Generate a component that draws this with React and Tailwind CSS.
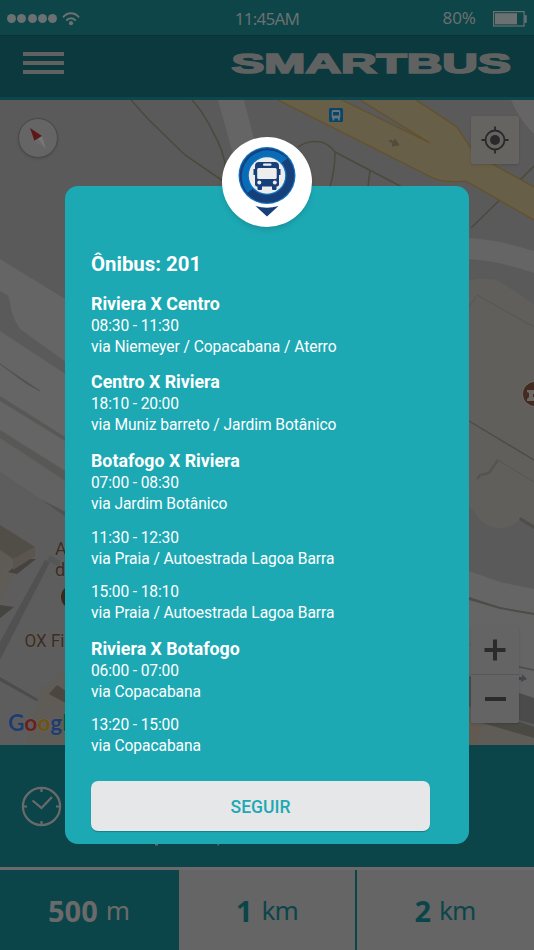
import React from 'react';

const schedule = [
  {
    title: 'Riviera X Centro',
    trips: [{ time: '08:30 - 11:30', via: 'via Niemeyer / Copacabana / Aterro' }],
  },
  {
    title: 'Centro X Riviera',
    trips: [{ time: '18:10 - 20:00', via: 'via Muniz barreto / Jardim Botânico' }],
  },
  {
    title: 'Botafogo X Riviera',
    trips: [
      { time: '07:00 - 08:30', via: 'via Jardim Botânico' },
      { time: '11:30 - 12:30', via: 'via Praia / Autoestrada Lagoa Barra' },
      { time: '15:00 - 18:10', via: 'via Praia / Autoestrada Lagoa Barra' },
    ],
  },
  {
    title: 'Riviera X Botafogo',
    trips: [
      { time: '06:00 - 07:00', via: 'via Copacabana' },
      { time: '13:20 - 15:00', via: 'via Copacabana' },
    ],
  },
];

function StatusBar() {
  return (
    <div className="h-[35px] bg-[#0d4549] grid grid-cols-3 items-center pl-[7px] pr-[7px] pt-[2px] text-[#6b7071] font-['Noto_Sans',sans-serif]">
      <div className="flex items-center gap-[5px]">
        <div className="flex gap-[1.3px]">
          {[0, 1, 2, 3, 4].map((i) => (
            <span key={i} className="w-[9px] h-[9px] rounded-full bg-[#6b7071]" />
          ))}
        </div>
        <svg width="18" height="14" viewBox="0 0 18 14" fill="none" stroke="#6b7071" strokeWidth="2">
          <path d="M1 5.3C5.5 0 12.5 0 17 5.3" />
          <path d="M4.2 8.6C6.9 5.5 11.1 5.5 13.8 8.6" />
          <circle cx="9" cy="11.2" r="2.1" fill="#6b7071" stroke="none" />
        </svg>
      </div>
      <div className="text-center text-[17px] tracking-[-0.75px] whitespace-nowrap">11:45AM</div>
      <div className="flex items-center justify-end gap-[17px]">
        <span className="text-[17px] leading-5 relative -top-[1px]">80%</span>
        <svg width="34" height="16" viewBox="0 0 34 16">
          <rect x="0.6" y="0.6" width="30.5" height="14.4" fill="none" stroke="#6b7071" strokeWidth="1.2" />
          <rect x="2" y="2.2" width="22" height="11.2" fill="#6b7071" />
          <rect x="31.5" y="4.2" width="2.2" height="7.6" fill="#6b7071" />
        </svg>
      </div>
    </div>
  );
}

function Header() {
  return (
    <div className="h-[65px] bg-[#0c393d] border-t border-t-[#0a3336] border-b-[3px] border-b-[#0d474b] flex items-start justify-between pl-[23px] pr-[20px] pt-[10px]">
      <div className="flex flex-col gap-[5px] mt-[6px]">
        <span className="w-[41px] h-[4px] bg-[#606262]" />
        <span className="w-[41px] h-[4px] bg-[#606262]" />
        <span className="w-[41px] h-[4px] bg-[#606262]" />
      </div>
      <svg width="284" height="38" viewBox="0 0 284 38">
        <g transform="translate(1.5 0) scale(1.73 1)">
          <text x="0" y="26.8" fontFamily="'Liberation Sans', sans-serif" fontWeight="700" fontSize="28.5" fill="#606262" stroke="#606262" strokeWidth="1.7">SMARTBUS</text>
        </g>
      </svg>
    </div>
  );
}

function Map() {
  return (
    <svg width="534" height="645" viewBox="0 100 534 645" className="block">
      <rect y="100" width="534" height="645" fill="#5a5a5a" />

      {/* paths and streets */}
      <path d="M218 100H244L256 146L234 158Z" fill="#656565" />
      <path d="M511 100H534V134Q520 121 511 100Z" fill="#656565" />
      <g fill="none" stroke="#4b4a3e" strokeWidth="1.6">
        <path d="M131 100L148 119L185 155L223 181" />
        <path d="M192 100Q204 113 213 132Q224 151 226 170" />
        <path d="M298 147Q308 140 321 142Q329 144 335 152L402 187" />
        <path d="M335 152Q335 170 330 187M370 170L368 187" />
        <path d="M534 166L510 190L471 228" />
      </g>

      {/* highway */}
      <path d="M278 100L433 178Q445 183 466 181L534 220V187L478 156L470 147L457 127L416 100Z" fill="#685f48" />
      <path d="M342 100H360L430 143Z" fill="#5a5a5a" />
      <g fill="none" stroke="#655128" strokeWidth="1.2">
        <path d="M278 100L433 178Q445 183 466 181L534 220" />
        <path d="M342 100L430 143L360 100M416 100L457 127L470 147L478 156L534 187" />
      </g>
      <path d="M390 140L394 142L395 139L399 145L392 146L393 143L389 141Z" fill="#514c3e" stroke="#514c3e" />
      <rect x="329" y="108" width="14" height="14" rx="1.5" fill="#064668" />
      <rect x="331.7" y="110" width="8.6" height="8.6" rx="1.5" fill="#6b7376" />
      <rect x="333" y="112" width="6" height="3.5" fill="#064668" />
      <path d="M332.5 118h1.8v2.5h-1.8zM338 118h1.8v2.5H338z" fill="#6b7376" />

      {/* left side roads */}
      <path d="M0 259L70 302V365L20 329Q14 320 11 310Q10 298 7 295L0 291Z" fill="#656565" />
      <path d="M0 331L70 377V485L0 439Z" fill="#656565" />
      <path d="M0 439L70 485V519L0 472Z" fill="#626262" />
      <path d="M0 396L70 440V444L0 401ZM0 430L70 474V484L0 438Z" fill="#585856" />
      <path d="M0 364L40 391L27 384Z" fill="#515151" stroke="#515151" strokeWidth="0.6" />

      {/* right side blocks */}
      <path d="M469 238Q495 239 534 251V273Q500 261 469 259Z" fill="#656565" />
      <path d="M469 281L475 279H491Q497 279 502 283L534 304V530L521 517Q515 528 498 528Q482 526 474 510L469 507Z" fill="#605f5b" />
      <path d="M469 307L477 295L534 327" fill="none" stroke="#575652" />
      <path d="M469 421L534 460" fill="none" stroke="#4e4c45" strokeWidth="1.4" />
      <path d="M498 460L534 482" fill="none" stroke="#595751" />
      <circle cx="500" cy="499" r="29" fill="#605f5b" />
      <path d="M477 479L480 475L489 473L498 460" fill="none" stroke="#56544e" strokeWidth="2.5" />
      <path d="M520 517L534 525V529L519 520Z" fill="#504e49" />
      <circle cx="535" cy="394" r="13" fill="#696663" />
      <circle cx="535" cy="394" r="12" fill="#422c22" />
      <path d="M527 390H534V394H533V397H534V401H527V399L529 397V393L527 392Z" fill="#6c6864" />

      <path d="M469 571L500 582L534 589V698L469 680Z" fill="#656565" />
      <path d="M469 597L500 607L534 613V615L500 609L469 600Z" fill="#4d4c46" />
      <path d="M469 676L534 698V724L469 707Z" fill="#4b4b4b" />
      <path d="M469 704L534 727V738L480 724Z" fill="#4a4944" />
      <path d="M469 706L482 723L534 738V745H469Z" fill="#5f5c57" />
      <path d="M469 706L482 723L476 745H469Z" fill="#625a51" />
      <path d="M505 664L534 670" stroke="#4d4c4a" strokeWidth="1.5" />
      <path d="M518 677H522V674L527 679L521 682V680H517Z" fill="#47454e" />

      {/* left side buildings */}
      <path d="M0 472L70 519V745H0Z" fill="#5d5d5d" />
      <path d="M42 500L70 514V520Z" fill="#525150" />
      <path d="M0 525L35 548L22 560L0 602Z" fill="#5f5c58" />
      <path d="M0 525L35 547L13 559L0 550Z" fill="#514e48" />
      <path d="M0 550L13 559L0 576Z" fill="#5e5a55" />
      <path d="M8 572L24 559H36L17 574Z" fill="#454340" />
      <path d="M35 547V556L13 570V559Z" fill="#5b554f" />
      <path d="M0 605L14 607L0 618Z" fill="#464440" />
      <path d="M45 560L50 562L0 660V642Z" fill="#515151" />
      <path d="M47 561L60 567V561L50 555Z" fill="#565656" />
      <path d="M0 677L38 699V702L0 681Z" fill="#4c4c4c" />
      <path d="M66 668L70 671V745H26L40 690Z" fill="#5f5c58" />
      <path d="M49 694L57 685L66 691V703L60 700Z" fill="#4b4740" />

      <g fontFamily="Roboto, sans-serif" fill="#3d2c22" stroke="#656361" strokeWidth="1.2" paintOrder="stroke">
        <text x="55" y="555" fontSize="18">A</text>
        <text x="55" y="576" fontSize="18">d</text>
        <text x="24.5" y="647" fontSize="19" textLength="40" lengthAdjust="spacingAndGlyphs">OX Fi</text>
      </g>
      <circle cx="73" cy="597" r="12" fill="#3c271d" />
      <text x="470" y="647" fontFamily="Roboto, sans-serif" fontSize="11.5" fill="#454545">al</text>
      <text x="8" y="731" fontFamily="Lato, sans-serif" fontWeight="700" fontSize="23" textLength="60" lengthAdjust="spacingAndGlyphs" stroke="#666" strokeWidth="1" paintOrder="stroke">
        <tspan fill="#1f3c70">G</tspan>
        <tspan fill="#6a201c">o</tspan>
        <tspan fill="#6e5410">o</tspan>
        <tspan fill="#1f3c70">g</tspan>
        <tspan fill="#174e27">l</tspan>
      </text>
    </svg>
  );
}

function MapControls() {
  return (
    <>
      <div className="absolute left-[18px] top-[18px] w-10 h-10 rounded-full bg-[#656565] border border-[#484848] shadow">
        <svg width="38" height="38" viewBox="0 0 38 38">
          <path d="M11 9L23 17L15.5 22Z" fill="#5e1718" />
          <path d="M23 17L27 30L15.5 22Z" fill="#777" />
          <path d="M19 19.5L27 30L15.5 22Z" fill="#696969" />
        </svg>
      </div>
      <div className="absolute left-[471px] top-[16px] w-12 h-12 rounded-[2px] bg-[#656461] shadow flex items-center justify-center">
        <svg width="28" height="28" viewBox="0 0 28 28" fill="none" stroke="#292929" strokeWidth="1.8">
          <circle cx="14" cy="14" r="9.5" />
          <circle cx="14" cy="14" r="5" fill="#292929" stroke="none" />
          <path d="M14 .5V5M14 23V27.5M.5 14H5M23 14H27.5" />
        </svg>
      </div>
      <div className="absolute left-[471px] top-[526px] w-12 h-[97px] rounded-[2px] bg-[#646464] shadow flex flex-col">
        <div className="flex-1 flex items-center justify-center border-b border-[#575757]">
          <svg width="22" height="22" viewBox="0 0 22 22"><path d="M9 0.5H13V9H21.5V13H13V21.5H9V13H.5V9H9Z" fill="#2b2b2b" /></svg>
        </div>
        <div className="flex-1 flex items-center justify-center">
          <span className="w-[21px] h-[4px] bg-[#2b2b2b]" />
        </div>
      </div>
    </>
  );
}

function BusBadge() {
  return (
    <div className="absolute left-[157px] -top-[49px] w-[90px] h-[90px] rounded-full bg-white shadow-md">
      <svg width="90" height="90" viewBox="0 0 90 90">
        <circle cx="45" cy="38.5" r="28.5" fill="#1272bd" />
        <circle cx="45" cy="38.5" r="27.3" fill="#17407b" />
        <path d="M25.3 55.7A26.2 26.2 0 0 1 65.2 21.8L58.5 26.5A19 19 0 0 0 31.5 51.5Z" fill="#086cb8" />
        <circle cx="45" cy="38.5" r="19.5" fill="#1272bd" />
        <circle cx="45" cy="38.5" r="18.2" fill="#ededed" />
        <g fill="#17407b">
          <path d="M37 25H53Q57 25 57 29V32H58.5V38H57V47.5Q57 49.5 55 49.5H54.5V52Q54.5 53 53.5 53H51Q50 53 50 52V49.5H40V52Q40 53 39 53H36.5Q35.5 53 35.5 52V49.5H35Q33 49.5 33 47.5V38H31.5V32H33V29Q33 25 37 25Z" />
          <path d="M33.5 69Q45 72.5 56.5 69L45 79.5Z" />
        </g>
        <rect x="41" y="26.5" width="8.5" height="2.2" rx="1" fill="#ededed" />
        <rect x="35.2" y="31" width="19.5" height="11" rx="1.5" fill="#ededed" />
        <circle cx="37.3" cy="45.5" r="2" fill="#ededed" />
        <circle cx="52.8" cy="45.5" r="2" fill="#ededed" />
      </svg>
    </div>
  );
}

function ScheduleModal() {
  return (
    <div className="absolute left-[65px] top-[186px] w-[404px] h-[658px] rounded-[13px] bg-[#1ca9b4] text-white font-['Roboto',sans-serif] px-[26px] pt-[66px]">
      <BusBadge />
      <h1 className="text-[20.4px] leading-6 font-bold">Ônibus: 201</h1>
      <div className="mt-[15.5px] flex flex-col gap-[12.8px]">
        {schedule.map((route) => (
          <div key={route.title}>
            <h2 className="text-[17.8px] leading-[23px] font-bold mb-[1px]">{route.title}</h2>
            <div className="flex flex-col gap-[12.5px] text-[15.6px] tracking-[-0.07px] leading-[21px]">
              {route.trips.map((trip) => (
                <div key={trip.time}>
                  <p className="tracking-[-0.15px]">{trip.time}</p>
                  <p>{trip.via}</p>
                </div>
              ))}
            </div>
          </div>
        ))}
      </div>
      <button className="mt-[23.6px] pt-[2px] w-[339px] h-[50px] rounded-[7px] bg-[#e6e7e9] shadow-[0_1px_1px_#14808a] text-[#1ca9b4] text-[17.5px] font-medium">
        SEGUIR
      </button>
    </div>
  );
}

function InfoBar() {
  return (
    <div className="h-[122px] bg-[#0c4549] pl-[21px] pt-[41px] flex items-start">
      <svg width="41" height="41" viewBox="0 0 41 41" fill="none" stroke="#6a6a6a" strokeWidth="2.2">
        <circle cx="20.5" cy="20.5" r="18.6" />
        <path d="M11.5 14.5L20.5 22L31 11" />
        <path d="M20.5 2V6M20.5 35V39M2 20.5H6M35 20.5H39" />
      </svg>
      <svg width="70" height="4" viewBox="0 0 70 4" className="ml-[92px] mt-[57px]" fill="#6a6a6a">
        <rect x="1" y="0.5" width="3" height="2" />
        <rect x="63.5" y="0.5" width="1.5" height="2" />
      </svg>
    </div>
  );
}

function DistanceTabs() {
  return (
    <div className="h-[83px] bg-[#656565] border-t-[3px] border-[#6c6a6a] flex font-['Noto_Sans',sans-serif] text-[#0c4549] text-[26px]">
      <div className="w-[179px] bg-[#0c4549] text-[#6a6a6a] flex items-center justify-center gap-2 pr-[2px] pt-px">
        <b className="text-[29px]">500</b>
        <span className="tracking-[-1px]">m</span>
      </div>
      <div className="w-[178px] border-r-2 border-[#0c4549] flex items-center justify-center gap-[9px] pt-px">
        <b className="text-[29px]">1</b>
        <span className="tracking-[-0.8px]">km</span>
      </div>
      <div className="flex-1 flex items-center justify-center gap-[8px] pr-px pt-px">
        <b className="text-[29px]">2</b>
        <span className="tracking-[-0.8px]">km</span>
      </div>
    </div>
  );
}

export default function App() {
  return (
    <div className="relative w-[534px] h-[950px] overflow-hidden">
      <StatusBar />
      <Header />
      <div className="relative h-[645px]">
        <Map />
        <MapControls />
      </div>
      <InfoBar />
      <DistanceTabs />
      <ScheduleModal />
    </div>
  );
}
